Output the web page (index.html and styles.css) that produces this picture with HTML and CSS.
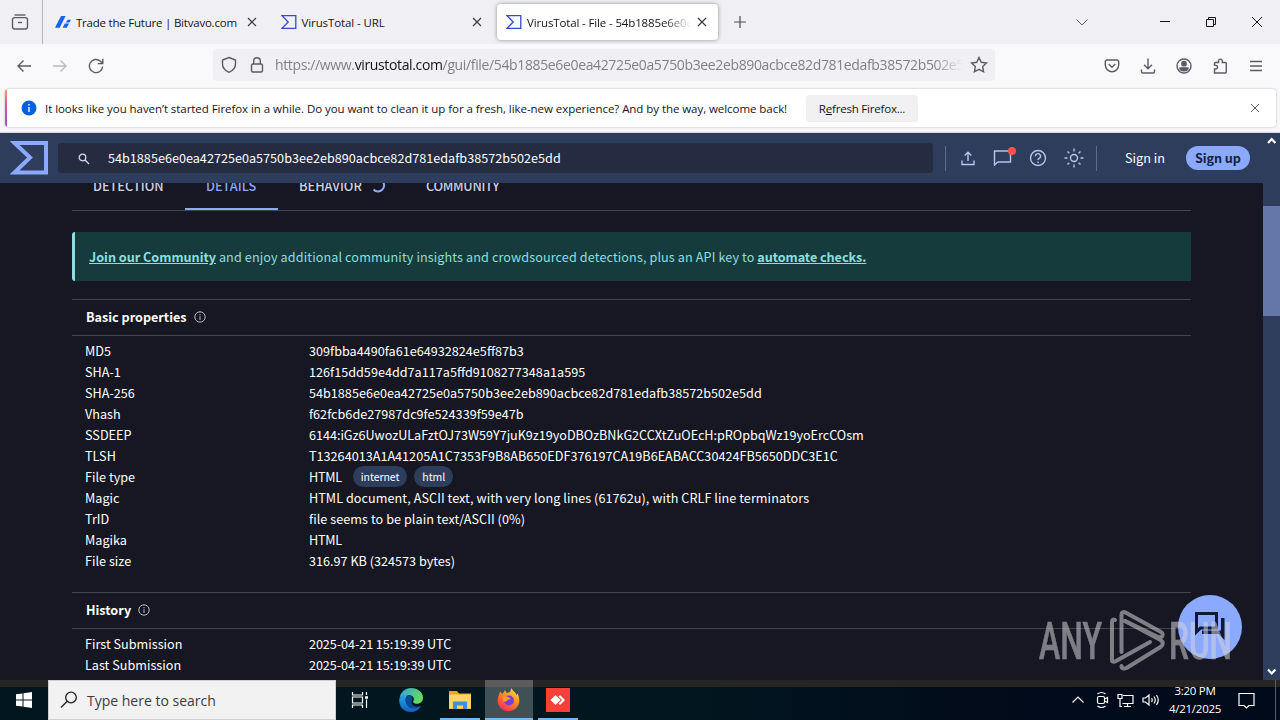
FILE: index.html
```html
<!DOCTYPE html>
<html lang="en">
<head>
    <meta charset="UTF-8">
    <meta name="viewport" content="width=device-width, initial-scale=1.0">
    <title>VirusTotal - File</title>
    <link rel="stylesheet" href="styles.css">
</head>
<body>
    <div class="tabbar">
        <div class="history-btn">
            <svg width="18" height="18" viewBox="0 0 18 18" fill="none" stroke="#5b5b66" stroke-width="1.4"><path d="M3.500 2h11"/><rect x="1.500" y="4.600" width="15" height="11.400" rx="2.200"/><path d="M7 9.500h4"/></svg>
        </div>
        <div class="tab">
            <svg class="fav" width="16" height="16" viewBox="0 0 16 16" fill="#1762f5"><path d="M6 2h4.600L4.700 13.700H0z"/><path d="M12.500 5.700H16l-1.600 2.800h-3.500z"/><path d="M9.800 9.500h4.300l-2.400 4.200H7.600z"/></svg>
            <span class="tab-title t1">Trade the Future | Bitvavo.com</span>
            <svg class="x" width="10" height="10" viewBox="0 0 10 10"><path d="M1 1l8 8M9 1l-8 8"/></svg>
        </div>
        <div class="tab">
            <svg class="fav" width="16" height="16" viewBox="0 0 16 16" fill="none" stroke="#3448d0" stroke-width="1.3"><path d="M1 1.700h13.800v12.600H1L7.200 8z"/></svg>
            <span class="tab-title t2">VirusTotal - URL</span>
            <svg class="x" width="10" height="10" viewBox="0 0 10 10"><path d="M1 1l8 8M9 1l-8 8"/></svg>
        </div>
        <div class="tab active">
            <svg class="fav" width="16" height="16" viewBox="0 0 16 16" fill="none" stroke="#3448d0" stroke-width="1.3"><path d="M1 1.700h13.800v12.600H1L7.200 8z"/></svg>
            <span class="tab-title t3">VirusTotal - File - 54b1885e6e0e</span>
            <svg class="x" width="10" height="10" viewBox="0 0 10 10"><path d="M1 1l8 8M9 1l-8 8"/></svg>
        </div>
        <svg class="new-tab" width="12" height="12" viewBox="0 0 12 12"><path d="M6 0v12M0 6h12"/></svg>
        <div class="win-btns">
            <svg width="12" height="12" viewBox="0 0 12 12" stroke="#5b5b66"><path d="M0.500 3.500L6 9l5.500-5.500"/></svg>
            <svg class="min" width="12" height="12" viewBox="0 0 12 12"><path d="M1 5.500h10"/></svg>
            <svg width="12" height="12" viewBox="0 0 12 12"><path d="M1.500 3.500h7v7h-7zM3.500 3.500v-2h7v7h-2"/></svg>
            <svg width="12" height="12" viewBox="0 0 12 12"><path d="M1 1l10 10M11 1L1 11"/></svg>
        </div>
    </div>

    <div class="toolbar">
        <div class="nav">
            <svg width="16" height="16" viewBox="0 0 16 16"><path d="M15 8H2M7.500 2.500L2 8l5.500 5.500"/></svg>
            <svg class="off" width="16" height="16" viewBox="0 0 16 16"><path d="M1 8h13M8.500 2.500L14 8l-5.500 5.500"/></svg>
            <svg width="16" height="16" viewBox="0 0 16 16"><path d="M14.600 8.500A6.600 6.600 0 1 1 12.500 3.200L14.500 5.200M9.800 5.600h5V.8"/></svg>
        </div>
        <div class="urlbar">
            <svg width="16" height="18" viewBox="0 0 16 18"><path d="M8 1.500l6.500 2.500v4c0 4-3 6.800-6.500 8.300C4.500 14.800 1.500 12 1.500 8V4z"/></svg>
            <svg width="16" height="18" viewBox="0 0 16 18"><rect x="2.500" y="8" width="11" height="8" rx="1.500"/><path d="M4.700 8V5a3.300 3.300 0 0 1 6.600 0v3"/></svg>
            <div class="url">https://www.<b>virustotal.com</b>/gui/file/54b1885e6e0ea42725e0a5750b3ee2eb890acbce82d781edafb38572b502e5</div>
            <svg class="star" width="18" height="18" viewBox="0 0 18 18"><path d="M9 1.500l2.300 4.800 5.200.7-3.800 3.600.9 5.200L9 13.300l-4.600 2.500.9-5.200L1.500 7l5.200-.7z"/></svg>
        </div>
        <div class="tools">
            <svg width="16" height="16" viewBox="0 0 16 16"><path d="M3 2h10a1.700 1.700 0 0 1 1.700 1.700V7A6.700 6.700 0 0 1 1.300 7V3.700A1.700 1.700 0 0 1 3 2zM4.700 6L8 9.200 11.300 6"/></svg>
            <svg width="16" height="16" viewBox="0 0 16 16"><path d="M8 .5v10M4 6.800l4 4 4-4M1.500 11.500v2.200c0 .8.500 1.300 1.300 1.300h10.400c.8 0 1.300-.5 1.300-1.300v-2.200"/></svg>
            <svg width="16" height="16" viewBox="0 0 16 16"><circle cx="8" cy="8" r="7"/><circle cx="8" cy="5.700" r="2.200" fill="#5b5b66"/><path d="M4 10h8c0 1.600-1.800 2.700-4 2.700S4 11.600 4 10z" fill="#5b5b66"/></svg>
            <svg width="16" height="16" viewBox="0 0 16 16"><path d="M2.500 15V11h1.200a1.800 1.800 0 0 0 0-3.600H2.500V5.500c0-.6.400-1 1-1h3V3a1.900 1.900 0 0 1 3.800 0v1.500h3c.6 0 1 .4 1 1V14c0 .6-.4 1-1 1z"/></svg>
            <svg width="16" height="16" viewBox="0 0 16 16"><path d="M2 3.500h12M2 8h12M2 12.500h12"/></svg>
        </div>
    </div>

    <div class="notice-wrap">
        <div class="notice">
            <svg width="16" height="16" viewBox="0 0 16 16"><circle cx="8" cy="8" r="7.500" fill="#0561e0"/><path d="M8 7v5M8 4v1.500" stroke="#fff" stroke-width="1.400"/></svg>
            <span class="notice-text">It looks like you haven’t started Firefox in a while. Do you want to clean it up for a fresh, like-new experience? And by the way, welcome back!</span>
            <button class="refresh">R<u>e</u>fresh Firefox...</button>
            <svg class="dismiss" width="10" height="10" viewBox="0 0 10 10"><path d="M1 1l8 8M9 1L1 9"/></svg>
        </div>
    </div>

    <div class="viewport">
        <div class="page">
            <header class="vt-header">
                <svg class="logo" width="39" height="36" viewBox="0 0 39 36"><path d="M4.500 3h31.500v29.500h-31.500L20 17.500z" fill="none" stroke="#8ba9ff" stroke-width="4"/></svg>
                <div class="search">
                    <svg width="12" height="12" viewBox="0 0 12 12"><circle cx="4.500" cy="4.500" r="3.300"/><path d="M7 7l4 4"/></svg>
                    <span class="search-text">54b1885e6e0ea42725e0a5750b3ee2eb890acbce82d781edafb38572b502e5dd</span>
                </div>
                <div class="vt-icons">
                    <svg width="16" height="16" viewBox="0 0 16 16"><path d="M8 11V2.500M4.700 5.500L8 2.200l3.300 3.300M2 10.500v4h12v-4"/></svg>
                    <div class="chat">
                        <svg width="19" height="18" viewBox="0 0 19 18"><path d="M1.500 16v-14h16v11H5z"/></svg>
                        <i></i>
                    </div>
                    <svg width="18" height="18" viewBox="0 0 18 18"><circle cx="9" cy="9" r="7.500"/><path d="M6.500 7.200a2.500 2.500 0 1 1 3.700 2.100C9.300 9.800 9 10 9 11M9 12.500V14"/></svg>
                    <svg width="20" height="20" viewBox="0 0 20 20"><circle cx="10" cy="10" r="3.500"/><path d="M10 .5v3M10 16.500v3M.5 10h3M16.500 10h3M3.500 3.500l1.800 1.800M14.700 14.700l1.800 1.800M3.500 16.500l1.800-1.800M14.700 5.300l1.800-1.800"/></svg>
                </div>
                <span class="signin">Sign in</span>
                <span class="signup">Sign up</span>
            </header>

            <div class="scroll">
                <nav class="vt-tabs">
                    <div class="vt-tab">DETECTION</div>
                    <div class="vt-tab on">DETAILS</div>
                    <div class="vt-tab behavior">BEHAVIOR <svg width="14" height="14" viewBox="0 0 14 14"><path d="M10.500 2.300A5.800 5.800 0 0 1 1.600 10.500"/></svg></div>
                    <div class="vt-tab community">COMMUNITY</div>
                </nav>
                <div class="banner"><p><b>Join our Community</b> <span>and enjoy additional community insights and crowdsourced detections, plus an API key to</span> <b>automate checks.</b></p></div>

                <section>
                    <h2><span>Basic properties</span><svg width="12" height="12" viewBox="0 0 12 12"><circle cx="6" cy="6" r="5.200"/><path d="M6 5.300V9M6 3v1.300"/></svg></h2>
                    <dl>
                        <dt>MD5</dt><dd>309fbba4490fa61e64932824e5ff87b3</dd>
                        <dt>SHA-1</dt><dd>126f15dd59e4dd7a117a5ffd9108277348a1a595</dd>
                        <dt>SHA-256</dt><dd>54b1885e6e0ea42725e0a5750b3ee2eb890acbce82d781edafb38572b502e5dd</dd>
                        <dt>Vhash</dt><dd>f62fcb6de27987dc9fe524339f59e47b</dd>
                        <dt>SSDEEP</dt><dd class="ssdeep">6144:iGz6UwozULaFztOJ73W59Y7juK9z19yoDBOzBNkG2CCXtZuOEcH:pROpbqWz19yoErcCOsm</dd>
                        <dt>TLSH</dt><dd>T13264013A1A41205A1C7353F9B8AB650EDF376197CA19B6EABACC30424FB5650DDC3E1C</dd>
                        <dt>File type</dt><dd class="types">HTML <span class="chip">internet</span><span class="chip">html</span></dd>
                        <dt>Magic</dt><dd class="magic">HTML document, ASCII text, with very long lines (61762u), with CRLF line terminators</dd>
                        <dt>TrID</dt><dd class="magic">file seems to be plain text/ASCII (0%)</dd>
                        <dt>Magika</dt><dd class="types">HTML</dd>
                        <dt>File size</dt><dd>316.97 KB (324573 bytes)</dd>
                    </dl>
                </section>
                <section>
                    <h2><span>History</span><svg width="12" height="12" viewBox="0 0 12 12"><circle cx="6" cy="6" r="5.200"/><path d="M6 5.300V9M6 3v1.300"/></svg></h2>
                    <dl>
                        <dt>First Submission</dt><dd class="date">2025-04-21 15:19:39 UTC</dd>
                        <dt>Last Submission</dt><dd class="date">2025-04-21 15:19:39 UTC</dd>
                    </dl>
                </section>
            </div>
        </div>
        <div class="scrollbar">
            <svg width="17" height="17" viewBox="0 0 17 17"><path d="M5 10l3.700-4 3.700 4"/></svg>
            <div class="thumb"></div>
            <svg class="down" width="17" height="17" viewBox="0 0 17 17"><path d="M5 6.500l3.700 4 3.700-4"/></svg>
        </div>
        <div class="fab">
            <svg width="32" height="32" viewBox="0 0 32 32"><path d="M2.500 21V2.500h20v14.500H6.500z" fill="none" stroke="#101a38" stroke-width="3"/><path d="M27 7h3.500v22l-6-6H8v-3.500h19z" fill="#101a38"/></svg>
        </div>
        <svg class="watermark" width="196" height="64" viewBox="0 0 196 64">
            <g class="wm-text">
                <text x="2" y="50" textLength="63" lengthAdjust="spacingAndGlyphs">ANY</text>
                <text x="132" y="50" textLength="63" lengthAdjust="spacingAndGlyphs">RUN</text>
            </g>
            <g fill="none" stroke="#d2d3d8" stroke-width="4" stroke-linecap="round" stroke-linejoin="round">
                <path d="M78 11c-2-1-3 0-3 2v38c0 2 2 2 4 1l34-19"/>
                <path d="M84.500 43V5.500c0-2 2-3 4-2L124 23c2 1 2 3 1 4.500-1 1-3 1-5 0L88 12"/>
                <path d="M84.500 57c0 3 3 3 5 2l34-21c3-2 3-5 0-7L88 12"/>
            </g>
        </svg>
    </div>

    <div class="taskbar">
        <div class="start"><svg width="16" height="16" viewBox="0 0 16 16" fill="#fff"><path d="M0 2.300l6.500-.9v6.100H0zM7.500 1.200L16 0v7.500H7.500zM0 8.500h6.500v6.100L0 13.700zM7.500 8.500H16V16l-8.500-1.200z"/></svg></div>
        <div class="win-search">
            <svg width="18" height="18" viewBox="0 0 18 18"><circle cx="11" cy="6.500" r="5.300"/><path d="M7.200 10.300L1 16.500"/></svg>
            <span>Type here to search</span>
        </div>
        <div class="app"><svg width="18" height="16" viewBox="0 0 18 16" fill="none" stroke="#fff" stroke-width="1.200"><path d="M1.500 0v3h10V0M1.500 16v-3h10v3M1.500 5h10v6h-10zM15.500 0v3M15.500 7.500V16"/><path d="M14 5.500h3" stroke-width="2.500"/></svg></div>
        <div class="app edge">
            <svg width="24" height="24" viewBox="0 0 24 24">
                <defs>
                    <linearGradient id="e1" x1="0" y1="0" x2="1" y2=".5"><stop offset="0" stop-color="#2aa5e0"/><stop offset="1" stop-color="#66dc5a"/></linearGradient>
                    <linearGradient id="e2" x1="0" y1="0" x2="0" y2="1"><stop offset="0" stop-color="#2ba4e6"/><stop offset="1" stop-color="#0e62bd"/></linearGradient>
                </defs>
                <path d="M.5 11C1 4.500 6 0 12 0c7 0 12 4.500 12 9.700 0 3.500-2.500 6-6 6-3 0-4.500-1.500-3.700-2.700 2-3-1-6-5-6C5 7 1.500 8 .5 11z" fill="url(#e1)"/>
                <path d="M.3 11C2 7 6 6 9.300 7c-3 2-3.300 5.500-1.800 8.500 2.500 4.500 9 5.500 14.500 2.500C19.500 22 16 24 12 24 4.500 24-.5 18 .3 11z" fill="url(#e2)"/>
                <path d="M9.300 7.500c-4 3-3 9 1 12 3.500 2 8 1 11.700-1.500-5 1.500-9.500-.5-9.500-4 0-1.500 1-2 1-3.500C13.500 8.500 11.500 7 9.300 7.500z" fill="#0b4a94"/>
            </svg>
        </div>
        <div class="app open">
            <svg width="22" height="18" viewBox="0 0 22 18"><path d="M0 0h8l2 2.500h12V18H0z" fill="#e9a52b"/><path d="M0 3.500h22V17.500H0z" fill="#fbd568"/><path d="M4 18v-7.500h14V18h-4v-3.500H8V18z" fill="#3c92d4"/></svg>
        </div>
        <div class="app open current">
            <svg width="24" height="24" viewBox="0 0 24 24">
                <defs><linearGradient id="ff" x1=".8" y1="0" x2=".2" y2="1"><stop offset="0" stop-color="#ffe23f"/><stop offset=".45" stop-color="#ff8a1f"/><stop offset="1" stop-color="#f5245b"/></linearGradient></defs>
                <path d="M2 7l1-3.500 2.500 2.500L8 2l1.500 3 3.500-1 1.500-4c1 3 4 4 5 7l1-1.500c2 4 2.500 8.500.5 12A11 11 0 0 1 1.500 17C0 13.500.5 10 2 7z" fill="url(#ff)"/>
                <circle cx="12" cy="12.500" r="5" fill="#7a3fd8"/>
                <path d="M5.500 9c2-1.500 5-.5 6.500.5l2 1.500-3.500 1c-1 2-3 2-4.500 1z" fill="#ff9a23"/>
            </svg>
        </div>
        <div class="app open">
            <svg width="24" height="24" viewBox="0 0 24 24"><path d="M0 0h24v24H0z" fill="#f8403a"/><path d="M9.500 7l5 5-5 5-5-5zM12.500 8.500L14 7l5 5-5 5-1.500-1.500L16 12z" fill="#fff"/></svg>
        </div>
        <div class="tray">
            <svg width="12" height="12" viewBox="0 0 12 12"><path d="M.5 8.500L6 3l5.500 5.500"/></svg>
            <svg width="14" height="18" viewBox="0 0 14 18"><rect x="2.500" y="5.500" width="7" height="7" rx="1.500"/><path d="M9.500 8l3-1.500v5L9.500 10M2.500 3q4-3 8 0M2.500 15q4 3 8 0"/></svg>
            <svg width="17" height="15" viewBox="0 0 17 15"><path d="M6 2.500h10v8H5.500M10.500 10.500v3M7 13.500h7M1 1.500h4v4H1zM3 5.500v8h2"/></svg>
            <svg width="18" height="14" viewBox="0 0 18 14"><path d="M1 5h2.500L7 2v10L3.500 9H1zM9.500 5q1.500 2 0 4M12 3.500q2.500 3.500 0 7M14.500 2q3.500 5 0 10"/></svg>
        </div>
        <div class="clock"><span>3:20 PM</span><span>4/21/2025</span></div>
        <svg class="action" width="17" height="17" viewBox="0 0 17 17"><path d="M1 1.500h15v12h-5l-2.500 2.500L6 13.500H1z"/></svg>
        <i class="desktop"></i>
    </div>
</body>
</html>
```
FILE: styles.css
```css
*{
    margin: 0;
    padding: 0;
    box-sizing: border-box;
}
body{
    width: 1280px;
    height: 720px;
    overflow: hidden;
    background-color: #f9f9fb;
    font-family: "Open Sans", "Noto Sans", sans-serif;
    font-size: 12px;
    color: #15141a;
}
svg{
    flex-shrink: 0;
    display: block;
}
span, .url{
    white-space: nowrap;
}

/* firefox tabs */
.tabbar{
    height: 44px;
    background-color: #f0f0f4;
    display: flex;
    align-items: center;
}
.history-btn{
    width: 43px;
    height: 44px;
    padding-left: 11px;
    border-right: 1px solid #b5b5bc;
    display: flex;
    align-items: center;
    margin-right: 3px;
}
.tab{
    width: 225.5px;
    height: 36px;
    padding: 0 15px 0 9px;
    display: flex;
    align-items: center;
}
.tab.active{
    width: 221px;
    padding-right: 11px;
    background-color: #fff;
    border-radius: 4px;
    box-shadow: 0 0 4px rgba(0,0,0,0.4);
}
.tab-title{
    width: 164px;
    margin-left: 5px;
    flex-shrink: 0;
    font-size: 11.5px;
}
.t1{
    letter-spacing: -0.22px;
}
.t2{
    letter-spacing: -0.1px;
}
.t3{
    letter-spacing: -0.14px;
    -webkit-mask-image: linear-gradient(to left, transparent, #000 26px);
    mask-image: linear-gradient(to left, transparent, #000 26px);
}
.x{
    margin-left: auto;
    stroke: #3c3c44;
    stroke-width: 1.2;
}
.new-tab{
    margin-left: 16px;
    stroke: #4b4b55;
    stroke-width: 1.2;
}
.win-btns{
    margin-left: auto;
    margin-right: 17px;
    display: flex;
    gap: 34px;
    fill: none;
    stroke: #15141a;
}
.win-btns .min{
    margin-left: 37px;
}

/* firefox toolbar */
.toolbar{
    height: 44px;
    display: flex;
    align-items: center;
    padding: 0 16px;
    fill: none;
    stroke: #5b5b66;
    stroke-width: 1.4;
    background-color: #f9f9fb;
}
.nav{
    display: flex;
    gap: 20px;
    width: 197px;
}
.off{
    opacity: 0.4;
}
.urlbar{
    width: 782px;
    height: 32px;
    margin-top: -3px;
    padding: 0 8px;
    border-radius: 4px;
    background-color: #f0f0f4;
    display: flex;
    align-items: center;
    gap: 12px;
}
.url{
    width: 688px;
    margin-left: -2px;
    font-size: 14px;
    letter-spacing: -0.36px;
    color: #80808a;
    -webkit-mask-image: linear-gradient(to left, transparent, #000 30px);
    mask-image: linear-gradient(to left, transparent, #000 30px);
}
.url b{
    font-weight: 400;
    color: #15141a;
}
.star{
    margin-left: -5px;
}
.tools{
    margin-left: auto;
    display: flex;
    gap: 20px;
}

.notice-wrap{
    height: 45px;
    padding: 1px 4px 5px 5px;
    background-color: #f7f7f9;
    border-bottom: 1px solid #d6d8de;
}
.notice{
    height: 38px;
    padding: 0 16px 0 14px;
    display: flex;
    align-items: center;
    background: linear-gradient(#ff9a50, #e0559a 40%, #9059c8) left / 2px 100% no-repeat, #fff;
    border-radius: 4px;
    box-shadow: 0 0 2px rgba(0,0,0,0.3);
    font-size: 11.5px;
}
.notice svg{
    margin-left: 2px;
}
.notice-text{
    width: 742px;
    margin-left: 8px;
    letter-spacing: -0.055px;
}
.refresh{
    width: 112px;
    height: 27px;
    margin-left: 19px;
    border: none;
    border-radius: 4px;
    background-color: #f0f0f2;
    font-family: inherit;
    font-size: 11.5px;
    letter-spacing: -0.2px;
    color: #15141a;
}
.notice .dismiss{
    margin-left: auto;
    stroke: #5b5b66;
}

/* virustotal */
.viewport{
    position: relative;
    height: 547px;
    display: flex;
    font-family: "Noto Sans CJK SC", sans-serif;
    font-size: 12.65px;
    color: #fff;
}
.page{
    width: 1263px;
    height: 547px;
    overflow: hidden;
    background-color: #161722;
}
.vt-header{
    height: 50px;
    padding-left: 10px;
    display: flex;
    align-items: center;
    background-color: #2f3d5c;
}
.search{
    width: 875px;
    height: 30px;
    margin-left: 9px;
    padding-left: 20px;
    border-radius: 4px;
    background-color: #252c42;
    display: flex;
    align-items: center;
    gap: 18px;
    fill: none;
    stroke: #d5dbee;
    stroke-width: 1.3;
}
.search svg{
    margin-top: 2px;
}
.search-text{
    stroke: none;
    padding-bottom: 2px;
}
.vt-icons{
    width: 152px;
    height: 25px;
    margin-left: 12px;
    padding-left: 14px;
    border-left: 1px solid #5d6b8d;
    border-right: 1px solid #5d6b8d;
    display: flex;
    align-items: center;
    gap: 17px;
    fill: none;
    stroke: #b4c5f0;
    stroke-width: 1.4;
}
.chat{
    position: relative;
}
.chat i{
    position: absolute;
    top: -2px;
    right: -4px;
    width: 8px;
    height: 8px;
    border-radius: 50%;
    background-color: #ff5050;
}
.signin{
    margin-left: 28px;
    padding-bottom: 2px;
}
.signup{
    width: 64px;
    height: 24px;
    margin-left: 21px;
    border-radius: 12px;
    background-color: #8ba9ff;
    color: #16213f;
    font-weight: 700;
    line-height: 23px;
    letter-spacing: -0.1px;
    text-align: center;
}
.scroll{
    height: 497px;
    overflow: hidden;
    padding: 0 72px;
}
.vt-tabs{
    width: 1119px;
    height: 48px;
    margin-top: -20px;
    border-bottom: 1px solid #42434e;
    display: flex;
}
.vt-tab{
    height: 47px;
    padding: 0 21px 2px;
    display: flex;
    align-items: center;
    gap: 10px;
    font-size: 12.75px;
    font-weight: 500;
    color: #cfd3e2;
}
.vt-tab:first-child{
    width: 113px;
}
.vt-tab.on{
    width: 93px;
    color: #8ba9ff;
    border-bottom: 2px solid #8ba9ff;
    padding-bottom: 0;
}
.behavior{
    width: 127px;
}
.community{
    letter-spacing: -0.3px;
}
.vt-tab svg{
    fill: none;
    stroke: #8ba9ff;
    stroke-width: 2;
}
.banner{
    width: 1119px;
    height: 49px;
    margin-top: 21px;
    padding-left: 14px;
    border-left: 3px solid #8fdedd;
    border-radius: 3px 0 0 3px;
    background-color: #163b3d;
    color: #8fdedd;
    line-height: 50px;
    white-space: nowrap;
}
.banner span{
    letter-spacing: 0.1px;
}
.banner b{
    text-decoration: underline;
    letter-spacing: -0.06px;
}
.banner b:first-child{
    letter-spacing: -0.02px;
}
section{
    width: 1119px;
    margin-top: 18px;
}
section + section{
    margin-top: 21px;
}
h2{
    height: 37px;
    padding-left: 14px;
    border-top: 1px solid #42434e;
    border-bottom: 1px solid #42434e;
    display: flex;
    align-items: center;
    gap: 7px;
    font-size: 12.6px;
}
h2 span{
    padding-bottom: 2px;
}
h2 svg{
    margin-top: -1px;
    fill: none;
    stroke: #b8bbc8;
}
dl{
    padding: 4px 0 0 13px;
    display: grid;
    grid-template-columns: 224px 1fr;
    grid-auto-rows: 21px;
    line-height: 21px;
}
.types{
    display: flex;
    align-items: center;
    letter-spacing: -0.3px;
}
.ssdeep{
    letter-spacing: -0.03px;
}
.magic{
    letter-spacing: 0.05px;
}
.date{
    letter-spacing: -0.08px;
}
.chip{
    height: 21px;
    margin-left: 7px;
    padding: 0 8px;
    border-radius: 11px;
    background-color: #2f3d5c;
    font-size: 10.5px;
    line-height: 21px;
    letter-spacing: -0.05px;
}
.chip:first-child{
    margin-left: 11px;
}
.scrollbar{
    width: 17px;
    background-color: #2f3d5c;
    display: flex;
    flex-direction: column;
    fill: none;
    stroke: #fff;
    stroke-width: 2.2;
}
.thumb{
    height: 110px;
    margin-top: 56px;
    background-color: #6576a8;
}
.down{
    margin-top: auto;
}
.fab{
    position: absolute;
    left: 1178px;
    top: 462px;
    width: 64px;
    height: 64px;
    border-radius: 50%;
    background-color: #8ba9ff;
    display: flex;
    align-items: center;
    justify-content: center;
}
.watermark{
    position: absolute;
    left: 1037px;
    top: 476px;
    opacity: 0.55;
}
.wm-text{
    font-family: Roboto, sans-serif;
    font-size: 51px;
    font-weight: 500;
    fill: #d2d3d8;
    stroke: #d2d3d8;
    stroke-width: 0.6;
}

/* windows taskbar */
.taskbar{
    height: 40px;
    display: flex;
    align-items: center;
    background: linear-gradient(#272424 7px, transparent 7px), linear-gradient(to right, #02161f, #01161f 55%, #020c1b 75%, #010a1a);
    color: #fff;
}
.start{
    width: 48px;
    padding-left: 16px;
}
.win-search{
    width: 288px;
    height: 40px;
    padding-left: 11px;
    border: 1px solid #d0d0d0;
    background-color: #f2f2f2;
    display: flex;
    align-items: center;
    gap: 9px;
    fill: none;
    stroke: #222;
    stroke-width: 1.3;
    color: #3c3c3c;
    font-size: 14px;
}
.win-search span{
    stroke: none;
}
.app{
    width: 48px;
    height: 40px;
    display: flex;
    align-items: center;
    justify-content: center;
}
.edge{
    width: 54px;
}
.open{
    box-shadow: inset 0 -2px #76b9ed;
    width: 40px;
    margin-left: 5px;
}
.app.edge + .open{
    margin-left: 2px;
}
.current{
    width: 48px;
    background-color: rgba(255,255,255,0.25);
}
.tray{
    margin-left: auto;
    display: flex;
    align-items: center;
    gap: 8px;
    fill: none;
    stroke: #fff;
    stroke-width: 1.2;
}
.tray svg:nth-child(2){
    margin-left: 3px;
}
.clock{
    width: 70px;
    display: flex;
    flex-direction: column;
    align-items: center;
    font-size: 11.5px;
    line-height: 18px;
    letter-spacing: -0.25px;
}
.action{
    margin-left: 8px;
    margin-right: 20px;
    fill: none;
    stroke: #fff;
    stroke-width: 1.2;
}
.desktop{
    width: 1px;
    height: 40px;
    margin-right: 4px;
    background-color: #5a6068;
}
```
